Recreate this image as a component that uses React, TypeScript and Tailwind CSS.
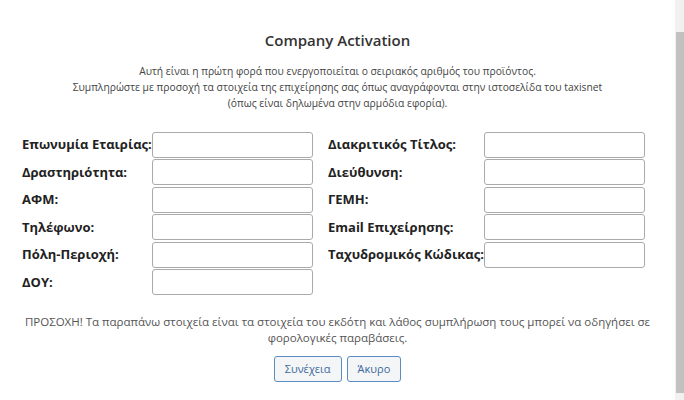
import React from 'react';

const leftFields = ['Επωνυμία Εταιρίας:', 'Δραστηριότητα:', 'ΑΦΜ:', 'Τηλέφωνο:', 'Πόλη-Περιοχή:', 'ΔΟΥ:'];
const rightFields = ['Διακριτικός Τίτλος:', 'Διεύθυνση:', 'ΓΕΜΗ:', 'Email Επιχείρησης:', 'Ταχυδρομικός Κώδικας:'];

const Field: React.FC<{ label?: string }> = ({ label }) => {
    if (!label) return <><div /><div /></>;
    return (
        <>
            <div className="text-[13px] font-bold text-[#222] whitespace-nowrap">{label}</div>
            <input
                type="text"
                className="h-[26px] w-[161px] rounded-[3px] border border-[#aaa] bg-white outline-none"
            />
        </>
    );
};

export default function App() {
    return (
        <div className="flex w-[684px] h-[400px] bg-white overflow-hidden" style={{ fontFamily: '"Open Sans", sans-serif' }}>
            <div className="flex-1 flex flex-col text-[#333]">
                {/* Header */}
                <h2 className="mt-[30px] text-center text-[15px] font-semibold text-[#333] leading-[20px]">Company Activation</h2>
                <p className="mt-[13px] text-center text-[10.3px] leading-[16px] text-[#444]">
                    Αυτή είναι η πρώτη φορά που ενεργοποιείται ο σειριακός αριθμός του προϊόντος.<br />
                    Συμπληρώστε με προσοχή τα στοιχεία της επιχείρησης σας όπως αναγράφονται στην ιστοσελίδα του taxisnet<br />
                    (όπως είναι δηλωμένα στην αρμόδια εφορία).
                </p>

                {/* Form */}
                <div className="mt-[20px] ml-[22px] grid grid-cols-[130px_161px_15px_156px_161px] auto-rows-[27.5px] items-center">
                    {leftFields.map((l, i) => (
                        <React.Fragment key={l}>
                            <Field label={l} />
                            <div />
                            <Field label={rightFields[i]} />
                        </React.Fragment>
                    ))}
                </div>

                {/* Notice */}
                <p className="mt-[18px] px-[20px] text-center text-[11.5px] leading-[16px] text-[#555]">
                    ΠΡΟΣΟΧΗ! Τα παραπάνω στοιχεία είναι τα στοιχεία του εκδότη και λάθος συμπλήρωση τους μπορεί να οδηγήσει σε φορολογικές παραβάσεις.
                </p>
                <div className="mt-[10px] flex justify-center gap-[5px]">
                    <button className="h-[26px] px-[10px] rounded-[3px] border border-[#5b8cc4] bg-[#f3f5f7] text-[11px] text-[#3d6a9c]">Συνέχεια</button>
                    <button className="h-[26px] px-[10px] rounded-[3px] border border-[#5b8cc4] bg-[#f3f5f7] text-[11px] text-[#3d6a9c]">Άκυρο</button>
                </div>
            </div>

            {/* Scrollbar */}
            <div className="w-[9px] bg-[#f1f1f1] flex flex-col">
                <div className="h-[32px]" />
                <div className="ml-[1px] flex-1 bg-[#c1c1c1] mb-[7px]" />
            </div>
        </div>
    );
}
